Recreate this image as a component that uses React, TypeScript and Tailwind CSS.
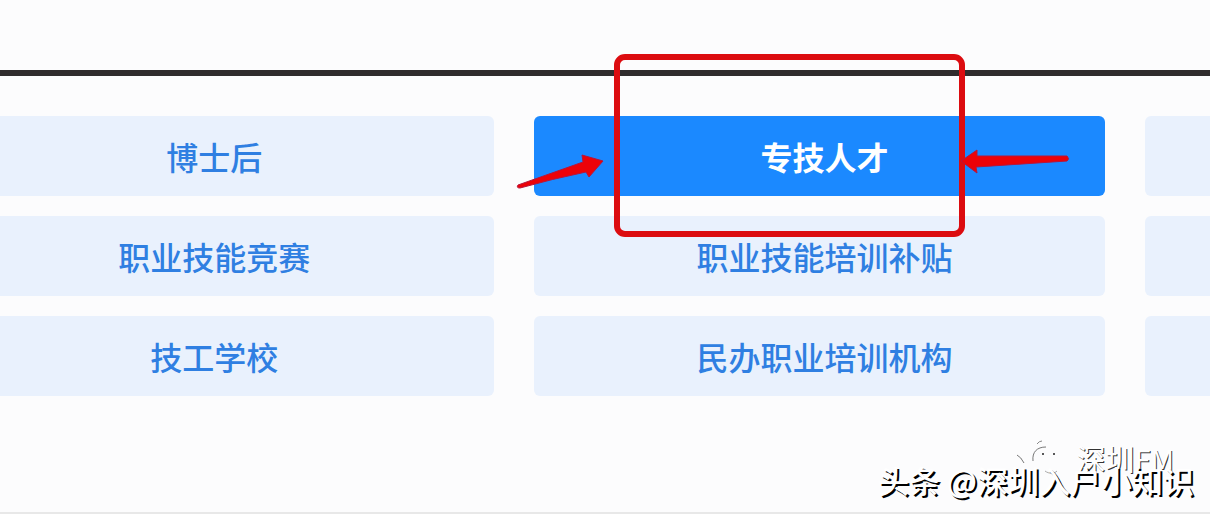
import clsx from "clsx";

const topics = [
  { id: "postdoc", name: "博士后" },
  { id: "professional", name: "专技人才", active: true },
  { id: "more-1", name: "" },
  { id: "contest", name: "职业技能竞赛" },
  { id: "subsidy", name: "职业技能培训补贴" },
  { id: "more-2", name: "" },
  { id: "school", name: "技工学校" },
  { id: "private", name: "民办职业培训机构" },
  { id: "more-3", name: "" },
];

function Highlight() {
  return (
    <svg
      className="pointer-events-none absolute -top-16 -left-5 z-10"
      width="560"
      height="190"
      viewBox="514 52 560 190"
      fill="none"
      aria-hidden="true"
    >
      <rect x="617" y="57" width="345" height="177" rx="8" stroke="#dc0c10" strokeWidth="6" />
      <path
        d="M518 185 L583 162 L582 155 L603 161 L589 177 L586 172 Q552 179 520 188 Q516 188 518 185Z"
        fill="#ed0208"
        stroke="#b5163c"
        strokeWidth="1"
      />
      <path
        d="M1067 156 L977 156 L977 150 L961 161 L977 173 L976 167 Q1022 164 1067 161 Q1070 159 1067 156Z"
        fill="#ed0208"
        stroke="#b5163c"
        strokeWidth="1"
      />
    </svg>
  );
}

function ChatLogo() {
  return (
    <svg width="52" height="44" viewBox="0 0 52 44" fill="none" aria-hidden="true">
      <path d="M1 19q4 2 7 8" stroke="#777" strokeWidth="1" />
      <path d="M21 8q2-3 5-3" stroke="#888" strokeWidth="1" />
      <path d="M17 25C16 16 21 11 30 11" stroke="#777" strokeWidth="1" />
      <path d="M29 35c4 3 9 3 12 0" stroke="#aaa" strokeWidth="1" />
      <circle cx="27" cy="18" r="1" fill="#222" />
      <circle cx="38" cy="18" r="1" fill="#222" />
    </svg>
  );
}

export default function App() {
  return (
    <main className="flex min-h-screen flex-col overflow-hidden border-b-2 border-[#e8e8e8] bg-[#fcfcfd] font-['Noto_Sans_CJK_SC',sans-serif]">
      <header className="h-19 border-b-6 border-[#302c2d]" />

      <ul className="mt-10 -ml-19 grid w-[148%] grid-cols-3 gap-x-10 gap-y-5">
        {topics.map((topic) => (
          <li key={topic.id} className="relative">
            <button
              type="button"
              aria-label={topic.name || "更多"}
              className={clsx(
                "block h-20 w-full rounded-md pl-[10px] text-[32px] leading-10",
                topic.active
                  ? "bg-[#1b89ff] font-bold text-white"
                  : "bg-[#e9f1fd] font-medium text-[#2f7fe2]"
              )}
            >
              {topic.name}
            </button>
            {topic.active && <Highlight />}
          </li>
        ))}
      </ul>

      <footer className="relative mt-auto flex justify-end pr-4 pb-3 text-white">
        <div className="absolute right-9 bottom-8 flex items-center gap-2">
          <ChatLogo />
          <span className="text-[29px] leading-10 [text-shadow:1px_1px_0_#333]">深圳FM</span>
        </div>
        <p className="relative text-[31px] leading-10 font-medium [text-shadow:2px_2px_0_#000]">
          头条 @深圳入户小知识
        </p>
      </footer>
    </main>
  );
}
